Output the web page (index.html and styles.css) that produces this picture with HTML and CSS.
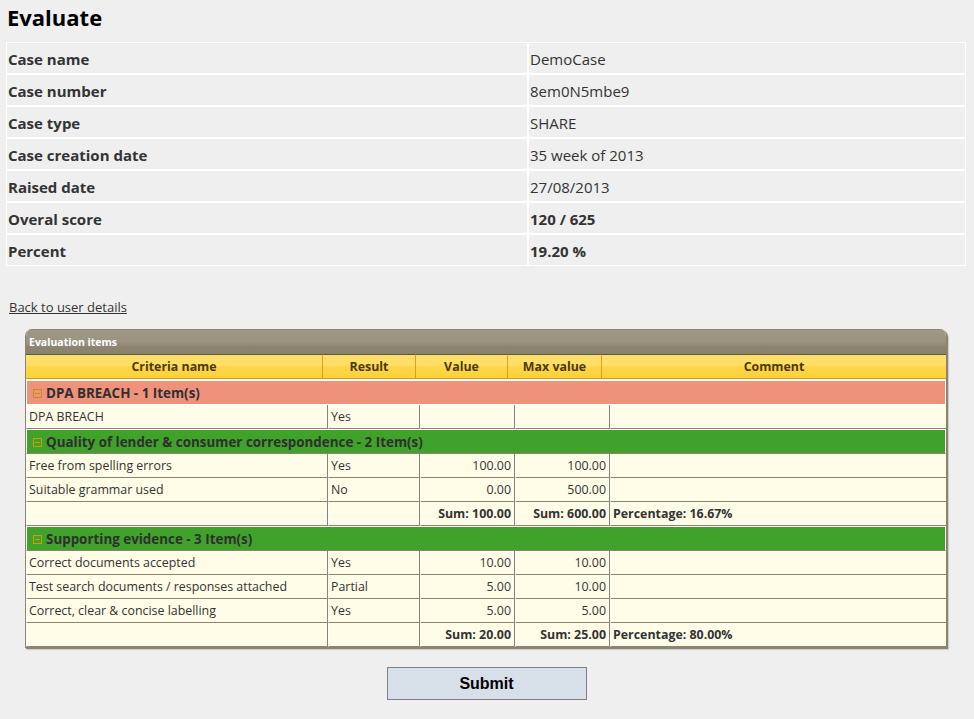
FILE: index.html
```html
<!DOCTYPE html>
<html lang="en">
<head>
<meta charset="utf-8">
<title>Evaluate</title>
<link rel="stylesheet" href="styles.css">
</head>
<body>
<h1 class="title">Evaluate</h1>
<table class="info">
  <tbody>
    <tr><th>Case name</th><td>DemoCase</td></tr>
    <tr><th>Case number</th><td>8em0N5mbe9</td></tr>
    <tr><th>Case type</th><td>SHARE</td></tr>
    <tr><th>Case creation date</th><td>35 week of 2013</td></tr>
    <tr><th>Raised date</th><td>27/08/2013</td></tr>
    <tr><th>Overal score</th><td class="strong">120 / 625</td></tr>
    <tr><th>Percent</th><td class="strong">19.20 %</td></tr>
  </tbody>
</table>

<div class="back-row"><a class="back" href="#">Back to user details</a></div>

<div class="grid">
  <div class="grid-title">Evaluation items</div>
  <table class="grid-head">
    <colgroup>
      <col class="hc1"><col class="hc2"><col class="hc3"><col class="hc4"><col class="hc5">
    </colgroup>
    <thead>
      <tr><th>Criteria name</th><th>Result</th><th>Value</th><th>Max value</th><th>Comment</th></tr>
    </thead>
  </table>
  <table class="grid-body">
    <colgroup>
      <col class="bc1"><col class="bc2"><col class="bc3"><col class="bc4"><col class="bc5">
    </colgroup>
    <tbody>
      <tr class="group red"><td colspan="5"><svg class="toggle" width="9" height="9" viewBox="0 0 9 9"><rect x="0.5" y="0.5" width="8" height="8" fill="none" stroke="#c98f08"/><line x1="2" y1="4.5" x2="7" y2="4.5" stroke="#c98f08"/></svg>DPA BREACH - 1 Item(s)</td></tr>
      <tr><td>DPA BREACH</td><td>Yes</td><td class="num"></td><td class="num"></td><td></td></tr>
      <tr class="group green"><td colspan="5"><svg class="toggle" width="9" height="9" viewBox="0 0 9 9"><rect x="0.5" y="0.5" width="8" height="8" fill="none" stroke="#d49a0c"/><line x1="2" y1="4.5" x2="7" y2="4.5" stroke="#d49a0c"/></svg>Quality of lender &amp; consumer correspondence - 2 Item(s)</td></tr>
      <tr><td>Free from spelling errors</td><td>Yes</td><td class="num">100.00</td><td class="num">100.00</td><td></td></tr>
      <tr><td>Suitable grammar used</td><td>No</td><td class="num">0.00</td><td class="num">500.00</td><td></td></tr>
      <tr class="sum"><td></td><td></td><td class="num">Sum: 100.00</td><td class="num">Sum: 600.00</td><td>Percentage: 16.67%</td></tr>
      <tr class="group green"><td colspan="5"><svg class="toggle" width="9" height="9" viewBox="0 0 9 9"><rect x="0.5" y="0.5" width="8" height="8" fill="none" stroke="#d49a0c"/><line x1="2" y1="4.5" x2="7" y2="4.5" stroke="#d49a0c"/></svg>Supporting evidence - 3 Item(s)</td></tr>
      <tr><td>Correct documents accepted</td><td>Yes</td><td class="num">10.00</td><td class="num">10.00</td><td></td></tr>
      <tr><td>Test search documents / responses attached</td><td>Partial</td><td class="num">5.00</td><td class="num">10.00</td><td></td></tr>
      <tr><td>Correct, clear &amp; concise labelling</td><td>Yes</td><td class="num">5.00</td><td class="num">5.00</td><td></td></tr>
      <tr class="sum"><td></td><td></td><td class="num">Sum: 20.00</td><td class="num">Sum: 25.00</td><td>Percentage: 80.00%</td></tr>
    </tbody>
  </table>
</div>

<div class="actions">
  <button class="submit" type="button">Submit</button>
</div>
</body>
</html>
```

FILE: styles.css
```css
html, body {
  margin: 0;
  padding: 0;
  background: #efefef;
}

body {
  padding: 0 8px 0 6px;
  font-family: "Open Sans", "Noto Sans", sans-serif;
  color: #333;
}

.title {
  margin: 3px 0 11px 1px;
  font-size: 22px;
  line-height: 28px;
  font-weight: 700;
  color: #000;
}

.info {
  width: 960px;
  border-collapse: separate;
  border-spacing: 0;
}

.info th,
.info td {
  height: 28px;
  padding: 2px 0 0 1px;
  border: 1px solid #fff;
  font-size: 15px;
  text-align: left;
  vertical-align: middle;
  color: #333;
}

.info th {
  width: 519px;
  font-weight: 700;
}

.info td {
  font-weight: 400;
}

.info td.strong {
  font-weight: 700;
}

.back-row {
  margin: 29px 0 0 3px;
  height: 34px;
}

.back {
  font-size: 13px;
  line-height: 16px;
  color: #333;
  text-decoration: underline;
}

.grid {
  margin-left: 19px;
  width: 920px;
  background: #fffde8;
  border-left: 1px solid #8b8470;
  border-right: 1px solid #8b8470;
  border-bottom: 1px solid #8b8470;
  border-radius: 7px 7px 0 0;
  box-shadow: 1px 1px 0 #8b8470, 2px 2px 1px rgba(0, 0, 0, 0.15);
  overflow: hidden;
}

.grid-title {
  height: 24px;
  padding-left: 3px;
  font-size: 10.5px;
  font-weight: 700;
  line-height: 24px;
  color: #fff;
  background: linear-gradient(to bottom, #9f9886 0%, #9b9381 50%, #8c8471 72%, #8a826f 100%);
  border-top: 1px solid #8f8775;
}

.grid-head,
.grid-body {
  width: 920px;
  table-layout: fixed;
  border-collapse: separate;
  border-spacing: 0;
}

.hc1 { width: 297px; }
.hc2 { width: 93px; }
.hc3 { width: 92px; }
.hc4 { width: 94px; }
.hc5 { width: 344px; }

.bc1 { width: 302px; }
.bc2 { width: 92px; }
.bc3 { width: 95px; }
.bc4 { width: 95px; }
.bc5 { width: 336px; }

.grid-head th {
  height: 23px;
  padding: 0;
  font-size: 12.4px;
  font-weight: 700;
  color: #4a3a05;
  text-align: center;
  background: linear-gradient(to bottom, #ffe068 0%, #ffdd66 45%, #ffd545 55%, #ffd23c 100%);
  border-top: 1px solid #5a5646;
  border-bottom: 1px solid #d99c06;
  border-right: 1px solid #d9a21b;
}

.grid-head th:last-child {
  border-right: 0;
}

.grid-body td {
  height: 23px;
  padding: 0 3px 0 2px;
  font-size: 12.4px;
  color: #333;
  white-space: nowrap;
  overflow: hidden;
  vertical-align: middle;
  border-left: 1px solid #fff;
  border-right: 1px solid #8b8470;
  border-bottom: 1px solid #8b8470;
}

.grid-body td:last-child {
  border-right: 0;
}

.grid-body td.num {
  text-align: right;
}

.grid-body tr.sum td {
  font-weight: 700;
}

.grid-body tr.group td {
  padding: 0 0 0 6px;
  font-size: 13.4px;
  font-weight: 700;
  color: #2f2f2f;
  border: 1px solid #fff;
}

.grid-body tr.group.red td {
  height: 23px;
  background: #ef927b;
  border-top: 2px solid #fff;
  border-bottom: 1px solid #fff;
}

.grid-body tr.group.green td {
  height: 23px;
  background: #40a22a;
  border-top: 1px solid #fff;
  border-bottom: 1px solid #8b8470;
}

.toggle {
  display: inline-block;
  margin-right: 4px;
  vertical-align: 0;
}

.actions {
  display: flex;
  justify-content: center;
  padding: 19px 0 20px 0;
}

.submit {
  width: 200px;
  height: 33px;
  margin-left: 1px;
  padding: 0;
  font-family: "Liberation Sans", Arial, sans-serif;
  font-size: 16px;
  font-weight: 700;
  color: #000;
  background: #d7dfe9;
  border: 1px solid #7f7f7f;
}
```
